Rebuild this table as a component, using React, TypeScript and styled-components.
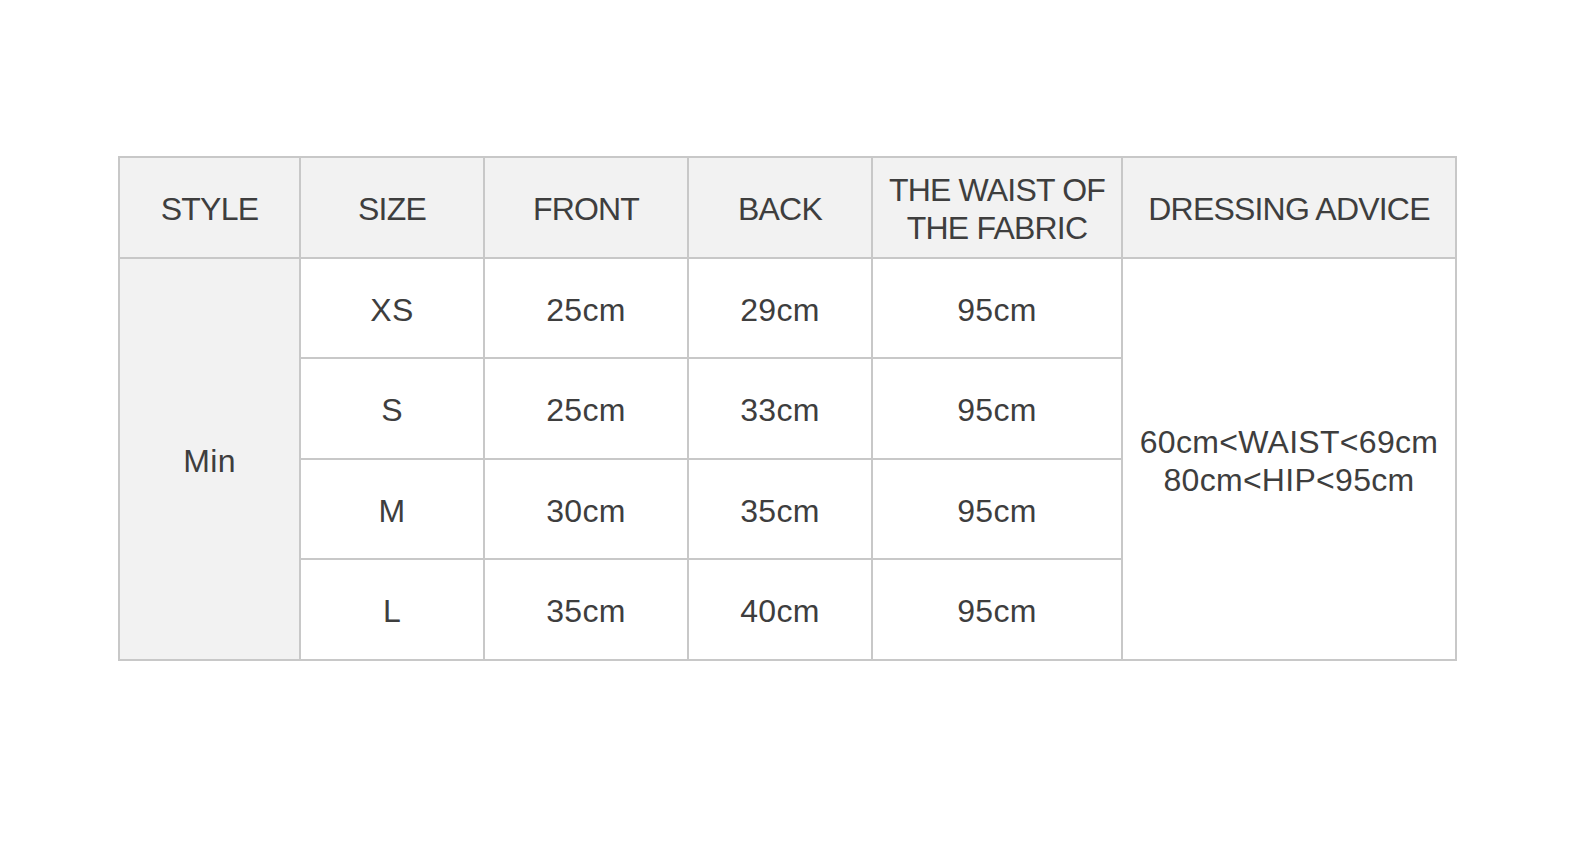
import React from "react";
import styled, { createGlobalStyle } from "styled-components";

const GlobalStyle = createGlobalStyle`
  html, body {
    margin: 0;
    padding: 0;
    background: #ffffff;
  }
  body {
    font-family: "Liberation Sans", Arial, sans-serif;
  }
`;

const Page = styled.div`
  width: 1580px;
  height: 850px;
  box-sizing: border-box;
  padding: 156px 0 0 118px;
  background: #ffffff;
`;

const Table = styled.table`
  border-collapse: collapse;
  table-layout: fixed;
  width: 1337px;
  color: #3e3e3e;
  font-size: 32px;
  border: 2px solid #c8c8c8;
`;

const Row = styled.tr`
  height: 100.5px;
`;

const Cell = styled.td<{ $shade?: boolean }>`
  border: 2px solid #c8c8c8;
  background: ${(p) => (p.$shade ? "#f2f2f2" : "#ffffff")};
  text-align: center;
  vertical-align: middle;
  padding: 4px 2px 0;
  line-height: 38px;
  letter-spacing: 0.3px;
`;

const HeadCell = styled(Cell).attrs({ as: "th" })`
  font-weight: normal;
  letter-spacing: -0.8px;
`;

const columns = [
  { title: "STYLE", width: 181 },
  { title: "SIZE", width: 184 },
  { title: "FRONT", width: 204 },
  { title: "BACK", width: 184 },
  { title: "THE WAIST OF THE FABRIC", width: 250 },
  { title: "DRESSING ADVICE", width: 334 },
];

const sizes = [
  { size: "XS", front: "25cm", back: "29cm", waist: "95cm" },
  { size: "S", front: "25cm", back: "33cm", waist: "95cm" },
  { size: "M", front: "30cm", back: "35cm", waist: "95cm" },
  { size: "L", front: "35cm", back: "40cm", waist: "95cm" },
];

const App: React.FC = () => {
  return (
    <Page>
      <GlobalStyle />
      <Table>
        <colgroup>
          {columns.map((c) => (
            <col key={c.title} style={{ width: c.width }} />
          ))}
        </colgroup>
        <thead>
          <Row>
            <HeadCell $shade>STYLE</HeadCell>
            <HeadCell $shade>SIZE</HeadCell>
            <HeadCell $shade>FRONT</HeadCell>
            <HeadCell $shade>BACK</HeadCell>
            <HeadCell $shade>
              THE WAIST OF
              <br />
              THE FABRIC
            </HeadCell>
            <HeadCell $shade>DRESSING ADVICE</HeadCell>
          </Row>
        </thead>
        <tbody>
          {sizes.map((s, i) => (
            <Row key={s.size}>
              {i === 0 && (
                <Cell $shade rowSpan={sizes.length}>
                  Min
                </Cell>
              )}
              <Cell>{s.size}</Cell>
              <Cell>{s.front}</Cell>
              <Cell>{s.back}</Cell>
              <Cell>{s.waist}</Cell>
              {i === 0 && (
                <Cell rowSpan={sizes.length}>
                  60cm&lt;WAIST&lt;69cm
                  <br />
                  80cm&lt;HIP&lt;95cm
                </Cell>
              )}
            </Row>
          ))}
        </tbody>
      </Table>
    </Page>
  );
};

export default App;
